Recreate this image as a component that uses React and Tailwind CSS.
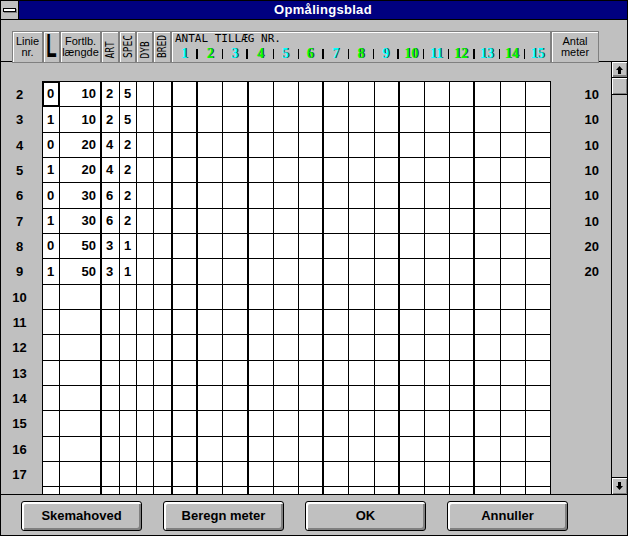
import React from 'react';

const rows = [
  ['0', '10', '2', '5', '10'],
  ['1', '10', '2', '5', '10'],
  ['0', '20', '4', '2', '10'],
  ['1', '20', '4', '2', '10'],
  ['0', '30', '6', '2', '10'],
  ['1', '30', '6', '2', '10'],
  ['0', '50', '3', '1', '20'],
  ['1', '50', '3', '1', '20'],
];

// columns that get a heavy right rule
const thick = new Set([1, 5, 6, 8, 11, 14, 17]);
const thickHead = new Set([1, 3, 6, 9, 12]);

const boxCls = 'border border-[#808080] bg-[#c0c0c0] shadow-[inset_1px_1px_0_#ffffff]';
const btnCls =
  'flex h-[30px] w-[121px] items-center justify-center rounded-[3px] border border-black bg-[#c0c0c0] text-[13px] font-bold text-black shadow-[inset_1px_1px_0_#ffffff,inset_2px_2px_0_#ffffff,inset_-1px_-1px_0_#808080,inset_-2px_-2px_0_#808080]';

function VText({ children }) {
  return (
    <div className={`${boxCls} flex flex-col items-center justify-end pb-[1px]`}>
      <span className="rotate-180 scale-y-[0.8] whitespace-nowrap font-['DejaVu_Sans_Mono',monospace] text-[12px] leading-none text-black [writing-mode:vertical-rl]">
        {children}
      </span>
    </div>
  );
}

function Arrow({ down }) {
  return (
    <svg width="7" height="8" viewBox="0 0 7 8" className={down ? 'rotate-180' : ''}>
      <polygon points="3.5,0 7,4 5,4 5,8 2,8 2,4 0,4" fill="#000" />
    </svg>
  );
}

function GridRow({ label, data, first }) {
  return (
    <div className="flex h-[25.33px] shrink-0">
      <div className="flex w-[41px] items-center justify-center pr-[4px] text-[13px] font-bold">{label}</div>
      <div className="grid w-[509px] grid-cols-[17px_42px_18px_17px_17px_19px_repeat(15,minmax(0,1fr))] border-l border-black bg-white">
        {Array.from({ length: 21 }, (_, i) => (
          <div
            key={i}
            className={`flex items-center border-b border-black text-[13px] font-bold ${
              thick.has(i) ? 'border-r-2' : 'border-r'
            } ${i === 1 ? 'justify-end pr-[4px]' : 'pl-[4px]'} ${
              first && i === 0 ? 'shadow-[inset_0_0_0_1px_#000]' : ''
            }`}
          >
            {data && i < 4 ? data[i] : ''}
          </div>
        ))}
      </div>
      <div className="flex w-[60px] items-center justify-end pr-[12px] text-[13px] font-bold">
        {data ? data[4] : ''}
      </div>
    </div>
  );
}

export default function App() {
  const nums = Array.from({ length: 15 }, (_, i) => i + 1);
  return (
    <div className="flex h-[536px] w-[628px] flex-col border border-black bg-[#c0c0c0] font-['Liberation_Sans',Arial,sans-serif] text-black">
      {/* title bar */}
      <div className="flex h-[19px] shrink-0 border-b border-black">
        <div className="flex w-[18px] items-center justify-center border-r border-black bg-[#c0c0c0]">
          <div className="h-[4px] w-[13px] border border-black bg-white shadow-[1px_1px_0_#808080]" />
        </div>
        <div className="flex flex-1 items-center justify-center bg-[#000080] text-[13px] font-bold tracking-[0.3px] text-white">
          Opmålingsblad
        </div>
      </div>

      {/* column headers */}
      <div className="flex h-[42px] shrink-0 border-b border-black pl-[11px] pt-[11px]">
        <div className="grid h-[30px] grid-cols-[31px_17px_41px_18px_17px_17px_18px_380px_48px]">
          <div className={`${boxCls} flex flex-col items-center justify-center text-[11px] leading-[11px]`}>
            <span>Linie</span>
            <span>nr.</span>
          </div>
          <div className={`${boxCls} flex items-center justify-center`}>
            <span className="scale-y-[1.9] text-[17px] font-bold leading-none">L</span>
          </div>
          <div className={`${boxCls} flex flex-col items-center justify-center text-[11px] leading-[11px]`}>
            <span>Fortlb.</span>
            <span>længde</span>
          </div>
          <VText>ART</VText>
          <VText>SPEC</VText>
          <VText>DYB</VText>
          <VText>BRED</VText>
          <div className={`${boxCls} flex flex-col`}>
            <div className="pl-[3px] pt-[1px] font-['DejaVu_Sans_Mono',monospace] text-[11px] leading-[11px]">
              ANTAL TILLÆG NR.
            </div>
            <div className="ml-[1px] mt-[3px] grid h-[12px] w-[377px] grid-cols-[repeat(15,minmax(0,1fr))]">
              {nums.map((n) => (
                <div key={n} className="flex items-center">
                  <span
                    className={`flex-1 text-center font-['Liberation_Serif',serif] text-[14px] font-bold leading-none [text-shadow:1px_0_0_#303030] ${
                      n % 2 ? 'text-[#00ffff]' : 'text-[#00ff00]'
                    }`}
                  >
                    {n}
                  </span>
                  {n < 15 && (
                    <span className={`h-[10px] bg-black ${thickHead.has(n) ? 'w-[2px]' : 'w-px'}`} />
                  )}
                </div>
              ))}
            </div>
          </div>
          <div className={`${boxCls} flex flex-col items-center justify-center text-[11px] leading-[11px]`}>
            <span>Antal</span>
            <span>meter</span>
          </div>
        </div>
      </div>

      {/* grid body */}
      <div className="flex h-[433px] shrink-0 border-b border-black">
        <div className="flex w-[610px] flex-col overflow-hidden">
          <div className="h-[19px] shrink-0" />
          <div className="flex h-px shrink-0">
            <div className="w-[41px]" />
            <div className="w-[509px] bg-black" />
          </div>
          {Array.from({ length: 17 }, (_, i) => (
            <GridRow key={i} label={i < 16 ? i + 2 : ''} data={rows[i]} first={i === 0} />
          ))}
        </div>
        <div className="flex w-[16px] flex-col border-l border-black">
          <div className="flex h-[16px] shrink-0 items-center justify-center border-b border-black shadow-[inset_1px_1px_0_#ffffff,inset_-1px_-2px_0_#808080]">
            <Arrow />
          </div>
          <div className="h-[17px] shrink-0 border-b border-black shadow-[inset_1px_1px_0_#ffffff,inset_-1px_-1px_0_#808080]" />
          <div className="flex-1" />
          <div className="flex h-[17px] shrink-0 items-center justify-center border-t border-black shadow-[inset_1px_1px_0_#ffffff,inset_-1px_-1px_0_#808080]">
            <Arrow down />
          </div>
        </div>
      </div>

      {/* buttons */}
      <div className="flex h-[40px] shrink-0 gap-[21px] pl-[20px] pt-[6px]">
        <button className={btnCls}>Skemahoved</button>
        <button className={btnCls}>Beregn meter</button>
        <button className={btnCls}>OK</button>
        <button className={btnCls}>Annuller</button>
      </div>
    </div>
  );
}
